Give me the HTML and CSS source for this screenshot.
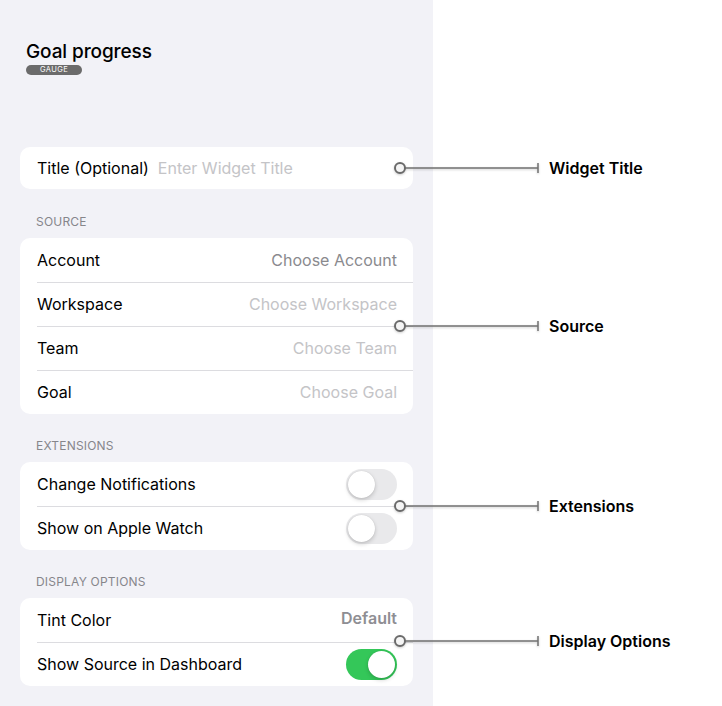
FILE: index.html
```html
<html>
<head>
  <link rel="stylesheet" href="styles.css">
</head>
<body>
  <div class="page">
    <div class="panel">
      <h1 class="widget-name">Goal progress</h1>
      <span class="badge">GAUGE</span>

      <div class="card first-card">
        <div class="row">
          <span class="label">Title (Optional)</span>
          <span class="placeholder">Enter Widget Title</span>
        </div>
      </div>

      <div class="section-title">SOURCE</div>
      <div class="card">
        <div class="row">
          <span class="label">Account</span>
          <span class="value">Choose Account</span>
        </div>
        <div class="row">
          <span class="label">Workspace</span>
          <span class="value muted">Choose Workspace</span>
        </div>
        <div class="row">
          <span class="label">Team</span>
          <span class="value muted">Choose Team</span>
        </div>
        <div class="row">
          <span class="label">Goal</span>
          <span class="value muted">Choose Goal</span>
        </div>
      </div>

      <div class="section-title">EXTENSIONS</div>
      <div class="card">
        <div class="row">
          <span class="label">Change Notifications</span>
          <span class="toggle"><span class="knob"></span></span>
        </div>
        <div class="row">
          <span class="label">Show on Apple Watch</span>
          <span class="toggle"><span class="knob"></span></span>
        </div>
      </div>

      <div class="section-title">DISPLAY OPTIONS</div>
      <div class="card">
        <div class="row">
          <span class="label">Tint Color</span>
          <span class="value strong">Default</span>
        </div>
        <div class="row">
          <span class="label">Show Source in Dashboard</span>
          <span class="toggle on"><span class="knob"></span></span>
        </div>
      </div>
    </div>

    <!-- callouts sit over the panel edge -->
    <div class="callout" style="top: 162px;">
      <svg width="146" height="12" viewBox="0 0 146 12"><line x1="11" y1="6" x2="144" y2="6"/><line x1="144" y1="1" x2="144" y2="11"/><circle cx="6" cy="6" r="5"/></svg>
      <span>Widget Title</span>
    </div>
    <div class="callout" style="top: 320px;">
      <svg width="146" height="12" viewBox="0 0 146 12"><line x1="11" y1="6" x2="144" y2="6"/><line x1="144" y1="1" x2="144" y2="11"/><circle cx="6" cy="6" r="5"/></svg>
      <span>Source</span>
    </div>
    <div class="callout" style="top: 500px;">
      <svg width="146" height="12" viewBox="0 0 146 12"><line x1="11" y1="6" x2="144" y2="6"/><line x1="144" y1="1" x2="144" y2="11"/><circle cx="6" cy="6" r="5"/></svg>
      <span>Extensions</span>
    </div>
    <div class="callout" style="top: 635px;">
      <svg width="146" height="12" viewBox="0 0 146 12"><line x1="11" y1="6" x2="144" y2="6"/><line x1="144" y1="1" x2="144" y2="11"/><circle cx="6" cy="6" r="5"/></svg>
      <span>Display Options</span>
    </div>
  </div>
</body>
</html>
```

FILE: styles.css
```css
body {
  margin: 0;
  background: #fff;
  font-family: Inter, "Noto Sans", sans-serif;
  color: #000;
}

.page {
  position: relative;
  width: 722px;
  height: 706px;
  overflow: hidden;
}

.panel {
  width: 433px;
  height: 706px;
  box-sizing: border-box;
  padding: 41px 20px 0 20px;
  background: #f2f2f7;
}

.widget-name {
  margin: 0 0 0 6px;
  font-size: 19px;
  line-height: 22px;
  font-weight: 500;
  letter-spacing: -0.1px;
}

.badge {
  display: block;
  width: 56px;
  height: 10px;
  margin: 2px 0 0 6px;
  border-radius: 5px;
  background: #6b6b6b;
  color: #fff;
  font-size: 7.5px;
  line-height: 10px;
  text-align: center;
  letter-spacing: 0.4px;
}

.card {
  background: #fff;
  border-radius: 10px;
  overflow: hidden;
}

.first-card {
  margin-top: 72px;
}

.first-card .row {
  height: 42px;
  justify-content: flex-start;
}

.section-title {
  padding: 25px 0 9px 16px;
  font-size: 12px;
  line-height: 14px;
  color: #86868b;
  letter-spacing: 0.2px;
}

.first-card + .section-title {
  padding-top: 26px;
}

.row {
  display: flex;
  align-items: center;
  justify-content: space-between;
  height: 44px;
  margin-left: 17px;
  padding-right: 16px;
  font-size: 16px;
}

.row + .row {
  border-top: 1px solid #dcdce0;
  height: 43px;
}

.label,
.placeholder,
.value {
  padding-bottom: 1px;
}

.placeholder {
  margin-left: 9px;
  color: #c4c4c7;
}

.value {
  color: #8a8a8e;
}

.value.muted {
  color: #c4c4c7;
}

.value.strong {
  font-weight: 600;
  color: #8e8e93;
  padding-bottom: 5px;
}

.toggle {
  position: relative;
  width: 51px;
  height: 31px;
  border-radius: 16px;
  background: #e9e9eb;
}

.toggle .knob {
  position: absolute;
  top: 2px;
  left: 2px;
  width: 27px;
  height: 27px;
  border-radius: 50%;
  background: #fff;
  box-shadow: 0 2px 4px rgba(0,0,0,0.18), 0 0 1px rgba(0,0,0,0.15);
}

.toggle.on {
  background: #34c759;
}

.toggle.on .knob {
  left: 22px;
}

.callout {
  position: absolute;
  left: 394px;
  display: flex;
  align-items: center;
  height: 12px;
}

.callout svg {
  display: block;
  filter: drop-shadow(0 1px 1px rgba(0,0,0,0.2));
}

.callout line {
  stroke: #707070;
  stroke-width: 1.5;
}

.callout circle {
  fill: #f5f5f5;
  stroke: #6a6a6a;
  stroke-width: 2;
}

.callout span {
  margin-left: 9px;
  font-size: 16px;
  font-weight: 600;
  white-space: nowrap;
}
```
